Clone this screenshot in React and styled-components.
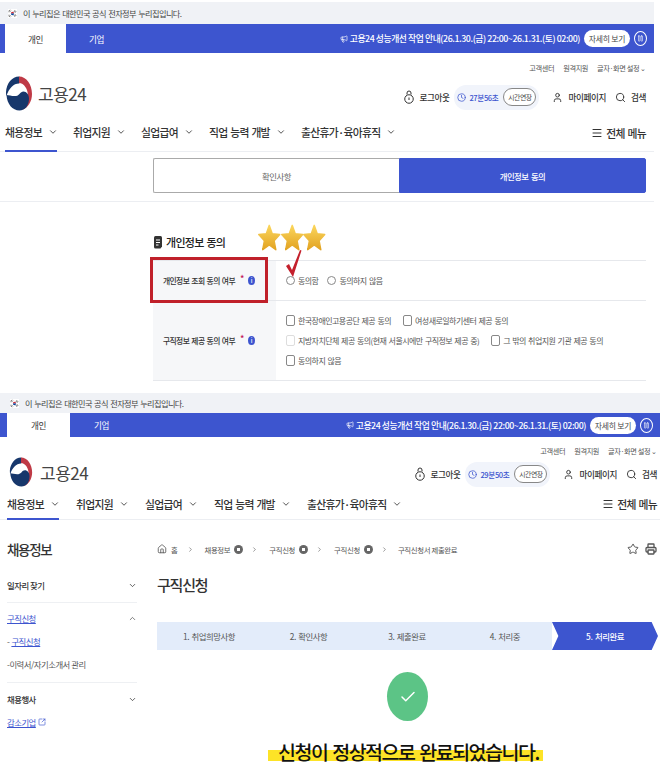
import React from 'react';
import styled, { createGlobalStyle } from 'styled-components';
import { ChevronDown, ChevronUp, ChevronRight, Search, User, Menu, Clock, Star, Printer, SquareArrowOutUpRight, House, Megaphone, Pause, Check } from 'lucide-react';

const GlobalStyle = createGlobalStyle`
  html, body { margin: 0; padding: 0; background: #fff; }
  body { font-family: "Noto Sans CJK KR", "Noto Sans", sans-serif; color: #333; }
  * { box-sizing: border-box; }
  svg { flex-shrink: 0; }
`;

const BLUE = '#3d55cf';

const Page = styled.div`
  width: 662px;
  height: 767px;
  overflow: hidden;
`;

const Shot = styled.section`
  width: ${(p) => p.$width}px;
  height: ${(p) => p.$height}px;
  padding-top: ${(p) => p.$top}px;
`;

const GovBar = styled.div`
  height: ${(p) => p.$height}px;
  background: #f0f2f6;
  display: flex;
  align-items: center;
  gap: 6px;
  padding-left: ${(p) => p.$left}px;
  font-size: 8.2px;
  letter-spacing: -0.6px;
  word-spacing: 1px;
  color: #444;
`;

const Band = styled.div`
  height: ${(p) => p.$height}px;
  background: ${BLUE};
  display: flex;
  align-items: stretch;
  padding-left: ${(p) => p.$left}px;
  padding-right: 7px;
`;

const BandTab = styled.div`
  width: ${(p) => p.$width}px;
  display: flex;
  align-items: center;
  justify-content: center;
  font-size: 8.6px;
  letter-spacing: -0.4px;
  background: ${(p) => (p.$on ? '#fff' : 'transparent')};
  color: ${(p) => (p.$on ? '#333' : '#fff')};
`;

const Notice = styled.div`
  margin-left: auto;
  display: flex;
  align-items: center;
  gap: 2px;
  color: #fff;
  font-size: 8.8px;
  letter-spacing: -0.42px;
  font-weight: 500;
  white-space: nowrap;
`;

const MoreButton = styled.span`
  background: #fff;
  color: #444;
  border-radius: 9px;
  height: 17px;
  width: 46px;
  margin-left: 2px;
  display: flex;
  align-items: center;
  justify-content: center;
  font-size: 7.8px;
  letter-spacing: -0.2px;
  font-weight: 400;
`;

const PauseButton = styled.span`
  width: 13px;
  height: 15px;
  margin-left: 2px;
  border: 1px solid #fff;
  border-radius: 50%;
  display: flex;
  align-items: center;
  justify-content: center;
`;

const UtilRow = styled.div`
  height: ${(p) => p.$height}px;
  display: flex;
  align-items: center;
  justify-content: flex-end;
  gap: 9px;
  padding-right: ${(p) => p.$right}px;
  font-size: 7.2px;
  letter-spacing: -0.4px;
  color: #555;
`;

const LogoRow = styled.div`
  height: ${(p) => p.$height}px;
  display: flex;
  align-items: center;
  justify-content: space-between;
  padding-left: ${(p) => p.$left}px;
  padding-right: ${(p) => p.$right}px;
`;

const Logo = styled.div`
  display: flex;
  align-items: center;
  gap: 6px;
  margin-bottom: ${(p) => p.$lift}px;
  font-size: 17px;
  color: #444;
  letter-spacing: -0.5px;
`;

const Tools = styled.div`
  display: flex;
  align-items: center;
  font-size: 8.6px;
  letter-spacing: -0.4px;
  font-weight: 500;
  color: #333;
`;

const Tool = styled.span`
  display: flex;
  align-items: center;
  gap: 5px;
  margin-left: ${(p) => p.$gap || 0}px;
`;

const Timer = styled.span`
  display: flex;
  align-items: center;
  gap: 3px;
  margin-left: 5px;
  height: 25px;
  width: 85px;
  padding: 0 3px;
  border-radius: 12px;
  background: #f1f4fb;
  color: #3d55cf;
  font-size: 7.6px;
  letter-spacing: -0.4px;
  white-space: nowrap;
`;

const Extend = styled.span`
  border: 1px solid #888;
  border-radius: 9px;
  background: #fff;
  color: #444;
  height: 18px;
  width: 33px;
  margin-left: auto;
  display: flex;
  align-items: center;
  justify-content: center;
  font-size: 6.8px;
  font-weight: 400;
  white-space: nowrap;
`;

const NavRow = styled.nav`
  height: ${(p) => p.$height}px;
  display: flex;
  align-items: stretch;
  gap: ${(p) => p.$gap}px;
  padding-left: ${(p) => p.$left}px;
  padding-right: ${(p) => p.$right}px;
  border-bottom: 1px solid #eceef2;
  font-size: 10.8px;
  letter-spacing: -0.7px;
  word-spacing: 1px;
  font-weight: 500;
  color: #333;
`;

const NavItem = styled.span`
  width: ${(p) => p.$width}px;
  display: flex;
  align-items: center;
  gap: 6px;
  padding-top: ${(p) => p.$drop}px;
  white-space: nowrap;
  border-bottom: 2px solid ${(p) => (p.$on ? BLUE : 'transparent')};
  margin-bottom: -1px;
`;

const AllMenu = styled.span`
  margin-left: auto;
  display: flex;
  align-items: center;
  gap: 3px;
  padding-top: ${(p) => p.$drop}px;
`;

const ConsentTabs = styled.div`
  margin: 6px 8px 0 153px;
  height: 35px;
  display: flex;
`;

const ConsentTab = styled.div`
  flex: 1;
  display: flex;
  align-items: center;
  justify-content: center;
  font-size: 8.4px;
  letter-spacing: -0.5px;
  word-spacing: 1px;
  border-radius: ${(p) => (p.$on ? '0 2px 2px 0' : '2px 0 0 2px')};
  border: 1px solid ${(p) => (p.$on ? BLUE : '#aaa')};
  border-right: ${(p) => (p.$on ? `1px solid ${BLUE}` : 'none')};
  background: ${(p) => (p.$on ? BLUE : '#fff')};
  color: ${(p) => (p.$on ? '#fff' : '#666')};
  font-weight: ${(p) => (p.$on ? 500 : 400)};
`;

const Rule = styled.div`
  height: 1px;
  margin-top: 8px;
  background: #eceef2;
`;

const Form = styled.div`
  position: relative;
  margin: 28px 8px 0 153px;
`;

const FormTitle = styled.h2`
  margin: 0;
  height: 24px;
  display: flex;
  align-items: center;
  gap: 3px;
  font-size: 11px;
  letter-spacing: -0.7px;
  word-spacing: 1px;
  font-weight: 500;
  color: #222;
`;

const FormGrid = styled.div`
  margin-top: 6px;
  display: grid;
  grid-template-columns: 123px 1fr;
  grid-template-rows: 40px 80px;
  border-top: 1px solid #e6e8ec;
`;

const LabelCell = styled.div`
  display: flex;
  align-items: center;
  padding-left: 10px;
  background: #f6f7f9;
  border-bottom: 1px solid #e6e8ec;
  font-size: 7.8px;
  letter-spacing: -0.62px;
  word-spacing: 1px;
  font-weight: 500;
  color: #333;
  white-space: nowrap;
`;

const Req = styled.span`
  color: #c2185b;
  font-size: 9px;
  margin: -5px 4px 0 5px;
`;

const Info = styled.span`
  width: 7px;
  height: 9px;
  border-radius: 50%;
  background: #3d55cf;
  color: #fff;
  font-size: 6px;
  line-height: 9px;
  text-align: center;
`;

const ValueCell = styled.div`
  display: flex;
  flex-direction: column;
  justify-content: center;
  gap: 7px;
  padding-left: 10px;
  border-bottom: 1px solid #e6e8ec;
`;

const OptionRow = styled.div`
  display: flex;
  align-items: center;
  height: 13px;
  gap: ${(p) => p.$gap}px;
`;

const Option = styled.span`
  display: flex;
  align-items: center;
  gap: 3px;
  font-size: 8px;
  letter-spacing: -0.55px;
  word-spacing: 1px;
  color: #555;
  white-space: nowrap;
`;

const Mark = styled.i`
  display: block;
  width: 9px;
  height: ${(p) => (p.$round ? 9 : 11)}px;
  border: 1px solid ${(p) => (p.$faint ? '#ddd' : '#888')};
  border-radius: ${(p) => (p.$round ? '50%' : '2px')};
  background: #fff;
`;

const RedBox = styled.div`
  position: absolute;
  left: -3px;
  top: 27px;
  width: 118px;
  height: 46px;
  border: 3px solid #c0202a;
`;

const Stars = styled.div`
  position: absolute;
  left: 105px;
  top: -7px;
  display: flex;
`;

const Tick = styled.svg`
  position: absolute;
  left: 131px;
  top: 19px;
`;

const Body = styled.div`
  display: flex;
  padding-left: 7px;
`;

const Side = styled.aside`
  width: 130px;
  flex-shrink: 0;
  padding-top: 17px;
`;

const SideTitle = styled.h3`
  margin: 0 0 13px;
  font-size: 13.5px;
  letter-spacing: -1.3px;
  line-height: 24px;
  font-weight: 500;
  color: #333;
`;

const SideHead = styled.div`
  height: 22px;
  display: flex;
  align-items: center;
  justify-content: space-between;
  font-size: 8.4px;
  letter-spacing: -0.5px;
  font-weight: ${(p) => (p.$link ? 400 : 500)};
  color: ${(p) => (p.$link ? '#3d55cf' : '#333')};
  & > span { text-decoration: ${(p) => (p.$link ? 'underline' : 'none')}; }
`;

const SideRule = styled.div`
  height: 1px;
  margin: ${(p) => p.$margin};
  background: #eef0f3;
`;

const SideLink = styled.div`
  height: 23px;
  display: flex;
  align-items: center;
  gap: 2px;
  font-size: 8.4px;
  letter-spacing: -0.5px;
  color: #555;
  & > u { color: #3d55cf; }
`;

const Main = styled.main`
  width: 503px;
  flex-shrink: 0;
  margin-left: 20px;
`;

const Crumbs = styled.div`
  height: 20px;
  margin-top: 19px;
  display: flex;
  align-items: center;
  font-size: 7.4px;
  letter-spacing: -0.35px;
  color: #555;
`;

const Crumb = styled.span`
  display: flex;
  align-items: center;
  gap: 4px;
  margin-left: ${(p) => p.$before || 0}px;
  margin-right: ${(p) => p.$after || 0}px;
  white-space: nowrap;
`;

const Badge = styled.i`
  display: block;
  width: 9px;
  height: 9px;
  border-radius: 50%;
  background: radial-gradient(circle, #fff 0 1.5px, #666 2px);
`;

const CrumbIcons = styled.span`
  margin-left: auto;
  margin-right: 3px;
  display: flex;
  gap: 6px;
  color: #555;
`;

const PageTitle = styled.h1`
  margin: 14px 0 0;
  font-size: 15px;
  letter-spacing: -1.2px;
  line-height: 24px;
  font-weight: 500;
  color: #333;
`;

const Steps = styled.ol`
  margin: 25px 0 0;
  padding: 0;
  list-style: none;
  height: 28px;
  display: flex;
`;

const Step = styled.li`
  width: ${(p) => p.$width}px;
  display: flex;
  align-items: center;
  justify-content: center;
  font-size: 8.4px;
  letter-spacing: -0.45px;
  word-spacing: 1px;
  background: ${(p) => (p.$on ? BLUE : '#e3ecfa')};
  color: ${(p) => (p.$on ? '#fff' : '#555')};
  font-weight: ${(p) => (p.$on ? 500 : 400)};
  clip-path: ${(p) => (p.$on ? 'polygon(0 0, 94% 0, 100% 50%, 94% 100%, 0 100%, 6% 50%)' : 'none')};
`;

const Done = styled.div`
  margin: 22px 0 0 230px;
  width: 41px;
  height: 49px;
  border-radius: 50%;
  background: #5cc486;
  color: #fff;
  display: flex;
  align-items: center;
  justify-content: center;
`;

const Message = styled.div`
  margin: 17px 0 0 111px;
  display: flex;
`;

const Highlight = styled.strong`
  padding: 0 4px 0 10px;
  font-size: 19.5px;
  letter-spacing: -1.5px;
  word-spacing: 2px;
  line-height: 28px;
  font-weight: 500;
  color: #111;
  white-space: nowrap;
  background: linear-gradient(transparent 43%, #fde327 43%, #fde327 82%, transparent 82%);
`;

function Flag() {
  return (
    <svg width="9" height="9" viewBox="0 0 22 22">
      <rect width="22" height="22" fill="#fff" />
      <path d="M7 11a4 4 0 0 1 8 0z" fill="#cd2e3a" />
      <path d="M7 11a4 4 0 0 0 8 0z" fill="#0047a0" />
      <path d="M1 6l4-4M3 8l4-4M16 3l4 4M14 5l4 4M1 16l4 4M3 14l4 4M16 19l4-4M14 17l4-4" stroke="#222" strokeWidth="1.600" />
    </svg>
  );
}

function Emblem({ height }) {
  return (
    <svg width="26" height={height} viewBox="0 0 52 70">
      <ellipse cx="26" cy="35" rx="26" ry="34" fill="#fff" />
      <path d="M26 1C12 1 1 15 0 32c0 3 0 5 1 8 2-8 6-14 10-18 4-5 10-7 15-7 3 0 3-14 0-14z" fill="#17376b" />
      <path d="M26 1c15 0 26 16 26 35 0 15-8 28-20 32 7-6 12-16 12-28 0-14-8-26-18-26z" fill="#bf3a46" />
      <path d="M1 38c1 18 12 31 26 31 11 0 19-10 19-24 0-8-5-14-11-14-7 0-7 8-15 9-7 1-14-2-19-2z" fill="#17376b" />
    </svg>
  );
}

function LockRing() {
  return (
    <svg width="10" height="15" viewBox="0 0 20 30" fill="none" stroke="#333" strokeWidth="2">
      <path d="M6 9V6a4 4 0 0 1 8 0v3" />
      <circle cx="10" cy="18" r="8.500" />
      <path d="M10 15v5" />
    </svg>
  );
}

function DocIcon() {
  return (
    <svg width="10" height="13" viewBox="0 0 20 26">
      <path d="M2 3a3 3 0 0 1 3-3h10a3 3 0 0 1 3 3v18l-3 4H5a3 3 0 0 1-3-3z" fill="#333" />
      <path d="M6 8h8M6 13h8M6 18h5" stroke="#fff" strokeWidth="2" />
    </svg>
  );
}

function Gold() {
  return (
    <svg width="22.500" height="29" viewBox="0 0 24 30">
      <defs>
        <linearGradient id="gold" x1="0" y1="0" x2="0" y2="1">
          <stop offset="0" stopColor="#fbd65c" />
          <stop offset="1" stopColor="#e2a322" />
        </linearGradient>
      </defs>
      <path d="M12 2l3.200 9 8 .8-6 6.600 1.800 9.600-7-5-7 5 1.800-9.600-6-6.600 8-.8z" fill="url(#gold)" stroke="url(#gold)" strokeWidth="1.500" strokeLinejoin="round" />
    </svg>
  );
}

function Header({ layout, time }) {
  const { left, right, govHeight, govLeft, bandHeight, tabWidth, utilHeight, logoHeight, logoLift, emblem, navHeight, navDrop, navGap } = layout;
  return (
    <>
      <GovBar $height={govHeight} $left={govLeft}>
        <Flag />
        <span>이 누리집은 대한민국 공식 전자정부 누리집입니다.</span>
      </GovBar>
      <Band $height={bandHeight} $left={left}>
        <BandTab $on $width={tabWidth}>개인</BandTab>
        <BandTab $width={tabWidth}>기업</BandTab>
        <Notice>
          <Megaphone size={8} />
          <span>고용24 성능개선 작업 안내(26.1.30.(금) 22:00~26.1.31.(토) 02:00)</span>
          <MoreButton>자세히 보기</MoreButton>
          <PauseButton><Pause size={7} /></PauseButton>
        </Notice>
      </Band>
      <UtilRow $height={utilHeight} $right={right}>
        <span>고객센터</span>
        <span>원격지원</span>
        <span>글자·화면 설정 ⌄</span>
      </UtilRow>
      <LogoRow $height={logoHeight} $left={left + 1} $right={right}>
        <Logo $lift={logoLift}><Emblem height={emblem} />고용24</Logo>
        <Tools>
          <Tool><LockRing />로그아웃</Tool>
          <Timer>
            <Clock size={9} />
            {time}
            <Extend>시간연장</Extend>
          </Timer>
          <Tool $gap={13}><User size={11} />마이페이지</Tool>
          <Tool $gap={9}><Search size={11} />검색</Tool>
        </Tools>
      </LogoRow>
      <NavRow $height={navHeight} $gap={navGap} $left={left} $right={right}>
        <NavItem $on $drop={navDrop} $width={52}>채용정보<ChevronDown size={10} /></NavItem>
        <NavItem $drop={navDrop} $width={52}>취업지원<ChevronDown size={10} /></NavItem>
        <NavItem $drop={navDrop} $width={52}>실업급여<ChevronDown size={10} /></NavItem>
        <NavItem $drop={navDrop} $width={76}>직업 능력 개발<ChevronDown size={10} /></NavItem>
        <NavItem $drop={navDrop} $width={92}>출산휴가·육아휴직<ChevronDown size={10} /></NavItem>
        <AllMenu $drop={navDrop}><Menu size={12} />전체 메뉴</AllMenu>
      </NavRow>
    </>
  );
}

const TOP = { left: 5, right: 8, govHeight: 22, govLeft: 8, bandHeight: 29, tabWidth: 61, utilHeight: 30, logoHeight: 28, logoLift: 8, emblem: 35, navHeight: 41, navDrop: 3, navGap: 16 };
const BOTTOM = { left: 7, right: 3, govHeight: 20, govLeft: 10, bandHeight: 24, tabWidth: 63, utilHeight: 27, logoHeight: 20, logoLift: 4, emblem: 30, navHeight: 36, navDrop: 5, navGap: 17 };

export default function App() {
  return (
    <Page>
      <GlobalStyle />
      <Shot $width={654} $height={392} $top={2}>
        <Header layout={TOP} time="27분56초" />
        <ConsentTabs>
          <ConsentTab>확인사항</ConsentTab>
          <ConsentTab $on>개인정보 동의</ConsentTab>
        </ConsentTabs>
        <Rule />
        <Form>
          <FormTitle>
            <DocIcon />
            개인정보 동의
          </FormTitle>
          <FormGrid>
            <LabelCell>개인정보 조회 동의 여부<Req>*</Req><Info>i</Info></LabelCell>
            <ValueCell>
              <OptionRow $gap={9}>
                <Option><Mark $round />동의함</Option>
                <Option><Mark $round />동의하지 않음</Option>
              </OptionRow>
            </ValueCell>
            <LabelCell>구직정보 제공 동의 여부<Req>*</Req><Info>i</Info></LabelCell>
            <ValueCell>
              <OptionRow $gap={12}>
                <Option><Mark />한국장애인고용공단 제공 동의</Option>
                <Option><Mark />여성새로일하기센터 제공 동의</Option>
              </OptionRow>
              <OptionRow $gap={12}>
                <Option><Mark $faint />지방자치단체 제공 동의(현재 서울시에만 구직정보 제공 중)</Option>
                <Option><Mark />그 밖의 취업지원 기관 제공 동의</Option>
              </OptionRow>
              <OptionRow $gap={12}>
                <Option><Mark />동의하지 않음</Option>
              </OptionRow>
            </ValueCell>
          </FormGrid>
          <RedBox />
          <Stars><Gold /><Gold /><Gold /></Stars>
          <Tick width="18" height="29" viewBox="0 0 18 29">
            <path d="M2 17l3-2 3 6L16 1l1.500.500L9 28z" fill="#c4202c" />
          </Tick>
        </Form>
      </Shot>
      <Shot $width={660} $height={375} $top={1}>
        <Header layout={BOTTOM} time="29분50초" />
        <Body>
          <Side>
            <SideTitle>채용정보</SideTitle>
            <SideHead><span>일자리 찾기</span><ChevronDown size={9} /></SideHead>
            <SideRule $margin="6px 0 4px" />
            <SideHead $link><span>구직신청</span><ChevronUp size={9} color="#555" /></SideHead>
            <SideLink>-<u>구직신청</u></SideLink>
            <SideLink>-이력서/자기소개서 관리</SideLink>
            <SideRule $margin="7px 0 5px" />
            <SideHead><span>채용행사</span><ChevronDown size={9} /></SideHead>
            <SideLink><u>감소기업</u><SquareArrowOutUpRight size={8} color="#3d55cf" /></SideLink>
          </Side>
          <Main>
            <Crumbs>
              <Crumb $after={10}><House size={10} />홈</Crumb>
              <ChevronRight size={7} />
              <Crumb $before={10} $after={8}>채용정보<Badge /></Crumb>
              <ChevronRight size={7} />
              <Crumb $before={11} $after={8}>구직신청<Badge /></Crumb>
              <ChevronRight size={7} />
              <Crumb $before={11} $after={8}>구직신청<Badge /></Crumb>
              <ChevronRight size={7} />
              <Crumb $before={10}>구직신청서 제출완료</Crumb>
              <CrumbIcons><Star size={12} /><Printer size={12} strokeWidth={2.6} /></CrumbIcons>
            </Crumbs>
            <PageTitle>구직신청</PageTitle>
            <Steps>
              <Step $width={104}>1. 취업희망사항</Step>
              <Step $width={95}>2. 확인사항</Step>
              <Step $width={102}>3. 제출완료</Step>
              <Step $width={94}>4. 처리중</Step>
              <Step $on $width={106}>5. 처리완료</Step>
            </Steps>
            <Done><Check size={18} /></Done>
            <Message><Highlight>신청이 정상적으로 완료되었습니다.</Highlight></Message>
          </Main>
        </Body>
      </Shot>
    </Page>
  );
}
